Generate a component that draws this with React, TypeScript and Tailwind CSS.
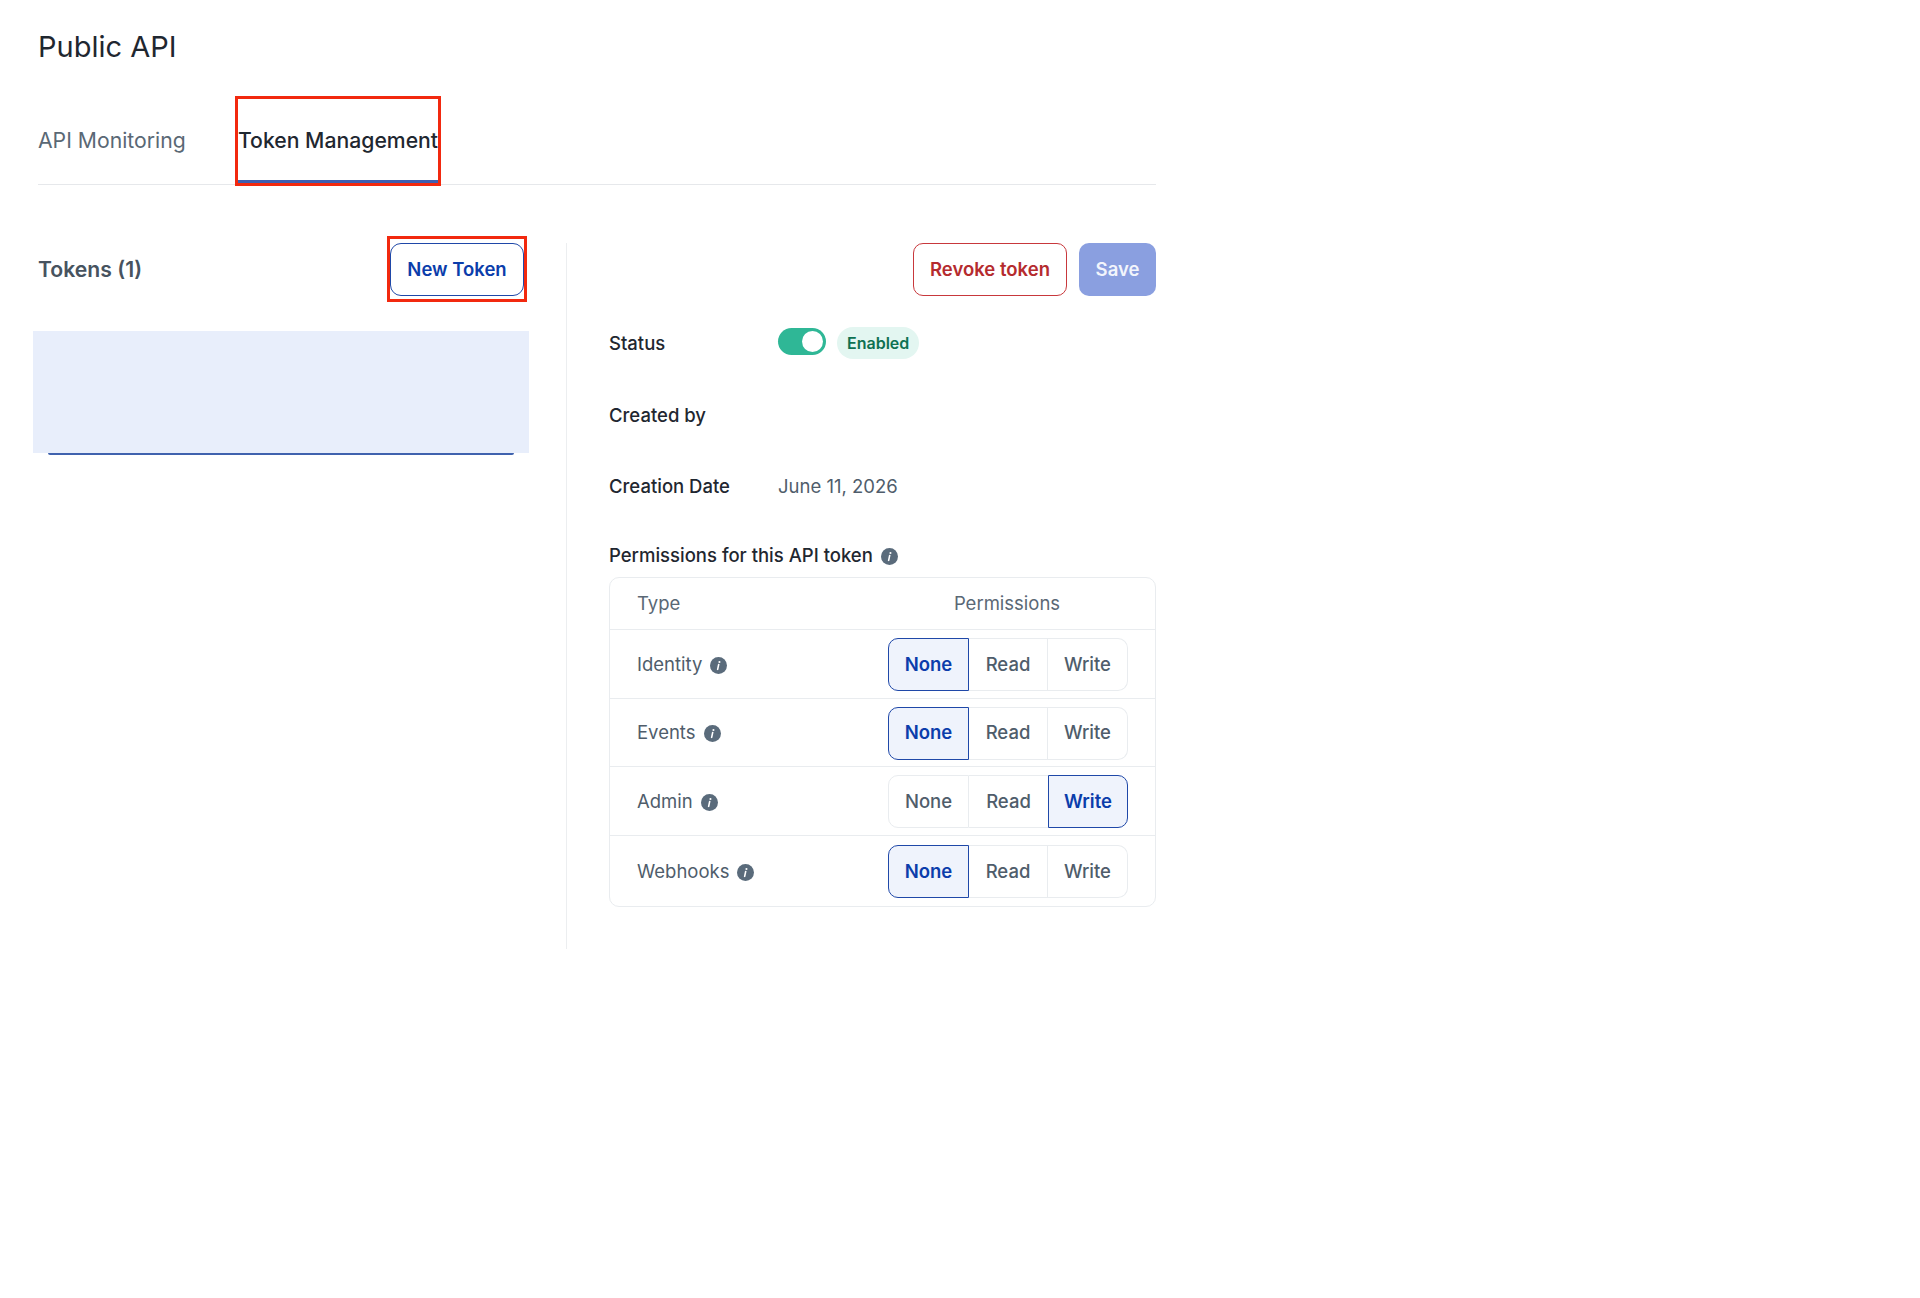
import React from "react";

function Info() {
  return (
    <svg viewBox="0 0 16 16" className="w-[17px] h-[17px] shrink-0 mt-[1px]">
      <circle cx="8" cy="8" r="8" fill="#5a6b7b" />
      <circle cx="8.9" cy="4.7" r="1" fill="#fff" />
      <path d="M8.2 7 L7.2 11.6" stroke="#fff" strokeWidth="1.5" strokeLinecap="round" />
    </svg>
  );
}

const opts = ["None", "Read", "Write"];

function Segment({ value }: { value: string }) {
  return (
    <div className="flex w-[240px] h-[53px]">
      {opts.map((o, i) => {
        const on = o === value;
        const radius = i === 0 ? "rounded-l-[10px]" : i === 2 ? "rounded-r-[10px]" : "";
        const width = i === 0 ? "w-[81px]" : i === 1 ? "w-[79px]" : "w-[80px]";
        const edge = i === 0 ? "border-l border-r" : i === 2 ? "border-r" : value === "Write" ? "" : "border-r";
        return on ? (
          <div
            key={o}
            className={`${width} ${radius} flex items-center justify-center border-[1.5px] border-[#1f48a8] bg-[#eff3fc] text-[#0b3dab] font-semibold`}
          >
            {o}
          </div>
        ) : (
          <div
            key={o}
            className={`${width} ${radius} ${edge} flex items-center justify-center border-t border-b border-[#e9ecef] text-[#4f5d6b] font-medium`}
          >
            {o}
          </div>
        );
      })}
    </div>
  );
}

function PermRow({ name, value, h, last }: { name: string; value: string; h: string; last?: boolean }) {
  return (
    <div className={`flex items-center justify-between pt-[2px] pl-[27px] pr-[27px] ${h} ${last ? "" : "border-b border-[#e9ecef]"}`}>
      <div className="flex items-center gap-[8px] text-[#4f5d6b]">
        {name}
        <Info />
      </div>
      <Segment value={value} />
    </div>
  );
}

export default function App() {
  return (
    <div className="min-h-[1298px] bg-white pl-[38px] pt-[27px] text-[18.5px] font-['Inter',sans-serif] text-[#1f2730]">
      <div className="w-[1118px]">
        <h1 className="text-[29px] leading-[40px] font-normal text-[#1f2730]">Public API</h1>
        <div className="flex items-start h-[89px] mt-[29px] border-b border-[#e6e8eb]">
          <div className="flex items-center h-[90px] w-[197px] text-[21.2px] text-[#5a6875]">API Monitoring</div>
          <div className="w-[206px] h-[90px] border-[3px] border-[#f2290f] flex flex-col">
            <div className="flex-1 flex items-center justify-center pt-[2px] text-[21.2px] font-medium text-[#1f2730] whitespace-nowrap">
              Token Management
            </div>
            <div className="h-[3px] bg-[#3f5fb0]" />
          </div>
        </div>
        <div className="flex mt-[58px] h-[706px]">
          <div className="w-[528px] pr-[39px]">
            <div className="flex items-center justify-between h-[52px]">
              <div className="pt-[1px] text-[21.2px] font-semibold text-[#47535f]">Tokens (1)</div>
              <div className="w-[140px] h-[66px] -my-[7px] border-[3px] border-[#f2290f] flex items-center justify-center">
                <button className="w-[134px] h-[53px] mt-[1px] rounded-[11px] border-[1.5px] border-[#1f48a8] bg-white text-[18.5px] font-semibold text-[#0b3dab]">
                  New Token
                </button>
              </div>
            </div>
            <div className="-ml-[5px] w-[496px] mt-[36px]">
              <div className="h-[122px] bg-[#e8eefb]" />
              <div className="mx-[15px] h-[2px] rounded-b-[2px] bg-[#3f62ae]" />
            </div>
          </div>
          <div className="flex-1 border-l border-[#eceef0] pl-[42px]">
            <div className="flex justify-end gap-[12px] h-[52px]">
              <button className="w-[154px] h-[53px] rounded-[10px] border-[1.5px] border-[#c8383c] bg-white font-semibold text-[#b52b2e]">
                Revoke token
              </button>
              <button className="w-[77px] h-[53px] rounded-[10px] bg-[#8a9fe0] font-semibold text-[#f2f5fc]">Save</button>
            </div>
            <div className="flex items-center h-[32px] mt-[32px]">
              <div className="w-[169px] pt-[2px] font-medium">Status</div>
              <div className="flex items-center h-[27px] w-[48px] -mt-[3px] rounded-full bg-[#2fb796]">
                <div className="ml-auto mr-[3px] w-[21px] h-[21px] rounded-full bg-white" />
              </div>
              <div className="ml-[11px] h-[32px] px-[10px] flex items-center rounded-full bg-[#e3f6f1] text-[16px] font-semibold text-[#0e7152]">
                Enabled
              </div>
            </div>
            <div className="flex items-center h-[32px] mt-[40px]">
              <div className="w-[169px] pt-[2px] font-medium">Created by</div>
            </div>
            <div className="flex items-center h-[32px] mt-[39px]">
              <div className="w-[169px] pt-[2px] font-medium">Creation Date</div>
              <div className="pt-[2px] text-[#4f5d6b]">June 11, 2026</div>
            </div>
            <div className="flex items-center gap-[8px] h-[24px] mt-[42px] font-medium">
              Permissions for this API token
              <Info />
            </div>
            <div className="mt-[9px] rounded-[10px] border border-[#e9ecef]">
              <div className="flex items-center justify-between h-[52px] pl-[27px] pr-[27px] border-b border-[#e9ecef] text-[#5a6875]">
                <div>Type</div>
                <div className="w-[240px] pr-[2px] text-center">Permissions</div>
              </div>
              <PermRow name="Identity" value="None" h="h-[68.5px]" />
              <PermRow name="Events" value="None" h="h-[68.5px]" />
              <PermRow name="Admin" value="Write" h="h-[68.5px]" />
              <PermRow name="Webhooks" value="None" h="h-[70px]" last />
            </div>
          </div>
        </div>
      </div>
    </div>
  );
}
